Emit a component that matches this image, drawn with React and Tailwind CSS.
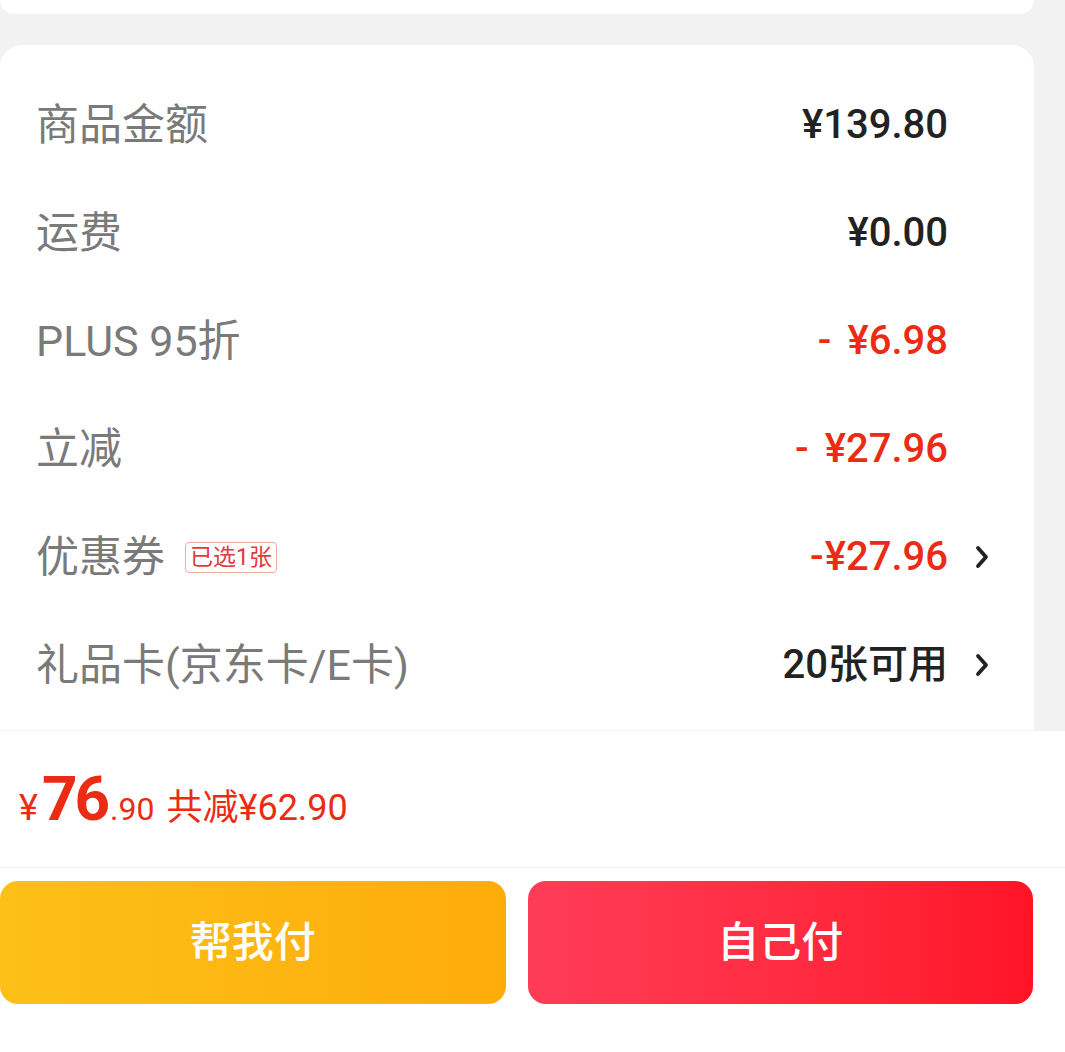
import React from "react";

const font = { fontFamily: "Roboto, 'Noto Sans CJK SC', sans-serif" };

function Chevron() {
  return (
    <svg width="14" height="26" viewBox="0 0 14 26" className="block">
      <path d="M3 4 L11 13 L3 22" fill="none" stroke="#222" strokeWidth="3.8" strokeLinecap="round" strokeLinejoin="round" />
    </svg>
  );
}

function Row({ label, tag, value, minus, red, arrow }) {
  return (
    <div className="flex h-[108px] items-center pl-[36px]">
      <div className="flex flex-1 items-center gap-[20px]">
        <span className="text-[43px] leading-none text-[#7a7a7a]">{label}</span>
        {tag && (
          <span className="rounded-[4px] border border-[#f4a9a0] px-[4px] py-[3px] text-[23px] leading-none text-[#e4393c]">
            {tag}
          </span>
        )}
      </div>
      <span className={`flex items-center text-[40px] font-medium leading-none ${red ? "text-[#ec2b14]" : "text-[#222222]"}`}>
        {minus && <span className={minus === "wide" ? "mr-[16px]" : "mr-[1px]"}>-</span>}
        {value}
      </span>
      <div className="flex w-[86px] items-center pl-[27px]">{arrow && <Chevron />}</div>
    </div>
  );
}

export default function App() {
  return (
    <div className="flex h-[1052px] w-[1065px] flex-col overflow-hidden bg-[#f2f2f2]" style={font}>
      <div className="h-[14px] w-[1034px] shrink-0 rounded-b-[20px] bg-white" />
      <div className="mt-[31px] flex w-[1034px] flex-1 flex-col rounded-t-[22px] bg-white pt-[26px]">
        <Row label="商品金额" value="¥139.80" />
        <Row label="运费" value="¥0.00" />
        <Row label="PLUS 95折" minus="wide" value="¥6.98" red />
        <Row label="立减" minus="wide" value="¥27.96" red />
        <Row label="优惠券" tag="已选1张" minus="narrow" value="¥27.96" red arrow />
        <Row label="礼品卡(京东卡/E卡)" value="20张可用" arrow />
      </div>
      <div className="flex h-[322px] shrink-0 flex-col border-t border-[#f3f3f3] bg-white">
        <div className="flex h-[137px] items-center border-b border-[#f3f3f3] pl-[19px] text-[#ec2b14]">
          <div className="flex items-baseline">
            <span className="text-[36px] leading-none">¥</span>
            <span className="ml-[4px] text-[62px] font-bold leading-none tracking-[-3px]">76</span>
            <span className="ml-[3px] text-[32px] leading-none">.90</span>
            <span className="ml-[12px] text-[36px] leading-none">共减¥62.90</span>
          </div>
        </div>
        <div className="mt-[13px] flex gap-[22px] pr-[32px]">
          <button className="flex h-[123px] flex-1 items-center justify-center rounded-[18px] bg-gradient-to-r from-[#fcc018] to-[#feac0a] text-[42px] font-medium text-white">
            帮我付
          </button>
          <button className="flex h-[123px] flex-1 items-center justify-center rounded-[18px] bg-gradient-to-r from-[#ff3c58] to-[#ff1226] text-[42px] font-medium text-white">
            自己付
          </button>
        </div>
      </div>
    </div>
  );
}
